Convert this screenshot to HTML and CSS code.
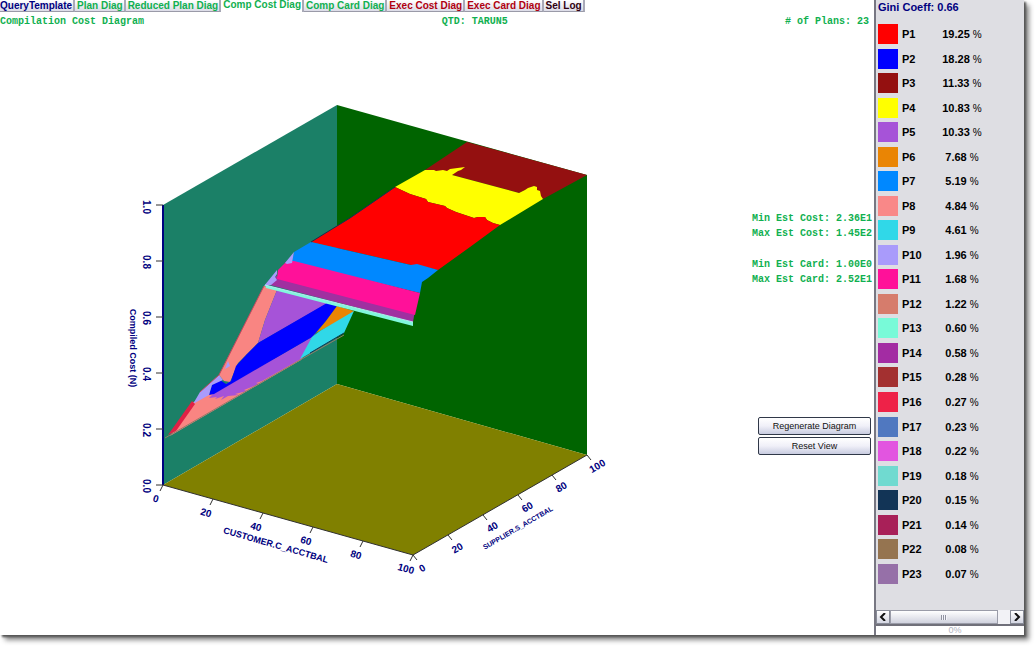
FILE: index.html
```html
<!DOCTYPE html>
<html lang="en">
<head>
<meta charset="utf-8">
<title>Compilation Cost Diagram</title>
<link rel="stylesheet" href="styles.css">
</head>
<body>
<div class="window">
  <main class="main">
    <div class="tabs" role="tablist">
      <button class="tab navy" role="tab">QueryTemplate</button>
      <button class="tab" role="tab">Plan Diag</button>
      <button class="tab" role="tab">Reduced Plan Diag</button>
      <button class="tab active" role="tab" aria-selected="true">Comp Cost Diag</button>
      <button class="tab" role="tab">Comp Card Diag</button>
      <button class="tab red" role="tab">Exec Cost Diag</button>
      <button class="tab red" role="tab">Exec Card Diag</button>
      <button class="tab maroon" role="tab">Sel Log</button>
    </div>
    <header class="header mono">
      <span class="title">Compilation Cost Diagram</span>
      <span>QTD: TARUN5</span>
      <span class="count"># of Plans: 23</span>
    </header>
    <div class="body">
      <figure class="chart">
        <svg viewBox="110 92 510 500" role="img" aria-label="Compiled cost surface">
          <polygon fill="#1b8067" points="163,205 337,105 337,384 163,485"/>
          <polygon fill="#006400" points="337,105 587,175 587,455 337,384"/>
          <polygon fill="#808000" points="163,485 337,384 587,455 413,555"/>
          <!-- upper sheet -->
          <polygon fill="#941010" points="467,142 587,175 543,199 534,186 519,193 452,175 425,170"/>
          <polygon fill="#ffff00" points="395,187 425,170 434,170 436,171 443,170 447,171 450,169 465,167 461,170 458,171 452,175 519,193 525,190 528,188 534,186 537,187 537,190 540,191 541,196 543,199 500,225 493,223 487,220 485,217 478,217 474,218 465,215 456,212 447,208 445,206 428,202 426,199 410,194"/>
          <polygon fill="#ff0000" points="311,242 350,218 395,187 410,194 426,199 428,202 445,206 447,208 456,212 465,215 474,218 478,217 485,217 487,220 493,223 500,225 470,247 438,270 417,265 411,265"/>
          <polygon fill="#0088ff" points="311,242 411,265 417,264 438,270 428,278 422,282 420,293 292,262 294,252"/>
          <polygon fill="#a030a0" points="276,276 415,310 413,322 270,285"/>
          <polygon fill="#ff1199" points="287,261 294,261 420,293 415,315 277,279 278,270"/>
          <polygon fill="#a99bfb" points="294,252 292,263 287,264 285,263"/>
          <polygon fill="#a99bfb" points="277,270 277,274 275,277 277,280 271,285 264,286"/>
          <path d="M311 242 350 218 395 187" fill="none" stroke="#143050"/>
          <!-- lower sheet -->
          <polygon fill="#f98582" points="264,286 277,290 265,320 258,343 247,354 238,363 230,382 224,381 219,375"/>
          <polygon fill="#a653d8" points="277,290 328,303 258,343 265,320"/>
          <polygon fill="#f98582" points="192,403 209,394 240,376 312,340 301,360 170,436"/>
          <polygon fill="#a653d8" points="312,337 316,333 301,359 262,381 256,383 259,384 244,390 247,391 235,394 239,395 228,396 221,400 224,396 215,399 217,397 209,398 213,394"/>
          <polygon fill="#0000ff" points="327,303 337,306 326,321 312,337 214,394 209,395 212,385 220,380 226,384 231,381 236,366 247,354 258,343"/>
          <polygon fill="#ea8504" points="337,306 354,311 350,315 316,333 326,321"/>
          <polygon fill="#30d8e8" points="354,311 344,333 300,359 312,337 320,331"/>
          <polygon fill="#a99bfb" points="219,375 223,380 212,385 209,395 193,404 200,392"/>
          <polygon fill="#a99bfb" points="228,361 230,366 225,369"/>
          <polygon fill="#e02045" points="192,401 195,404 176,431 168,435"/>
          <path d="M264 286 219 375 200 392" fill="none" stroke="#c34a5e"/>
          <path d="M165 438 300 360 344 335" fill="none" stroke="#937c68"/>
          <path d="M310 353 344 333" fill="none" stroke="#123456"/>
          <polygon fill="#80f8dc" points="265,285 413,322 413,326 266,288"/>
          <path d="M265 285 413 322" fill="none" stroke="#b8e8f4"/>
          <!-- axes -->
          <path class="axis" d="M163 205V485"/>
          <path class="edge" d="M163 485 413 555 587 455"/>
          <path class="edge" d="M156 205h7M156 261h7M156 317h7M156 373h7M156 429h7M156 485h7"/>
          <path class="edge" d="M163 485l-3 6M213 499l-3 6M263 513l-3 6M313 527l-3 6M363 541l-3 6M413 555l-3 6"/>
          <path class="edge" d="M413 555l4 5M448 535l4 5M483 515l4 5M518 495l4 5M552 475l4 5M587 455l4 5"/>
          <g class="ticks">
            <text transform="translate(143 207) rotate(90)">1.0</text>
            <text transform="translate(143 262) rotate(90)">0.8</text>
            <text transform="translate(143 318) rotate(90)">0.6</text>
            <text transform="translate(143 374) rotate(90)">0.4</text>
            <text transform="translate(143 430) rotate(90)">0.2</text>
            <text transform="translate(143 486) rotate(90)">0.0</text>
            <text transform="translate(155 502) rotate(16)">0</text>
            <text transform="translate(205 516) rotate(16)">20</text>
            <text transform="translate(255 530) rotate(16)">40</text>
            <text transform="translate(305 544) rotate(16)">60</text>
            <text transform="translate(355 558) rotate(16)">80</text>
            <text transform="translate(405 572) rotate(16)">100</text>
            <text transform="translate(424 571) rotate(-30)">0</text>
            <text transform="translate(459 551) rotate(-30)">20</text>
            <text transform="translate(494 530) rotate(-30)">40</text>
            <text transform="translate(529 510) rotate(-30)">60</text>
            <text transform="translate(563 490) rotate(-30)">80</text>
            <text transform="translate(599 469) rotate(-30)">100</text>
            <text class="name" transform="translate(130 348) rotate(90)">Compiled Cost (N)</text>
            <text class="name" transform="translate(275 548) rotate(16)">CUSTOMER.C_ACCTBAL</text>
            <text class="small" transform="translate(519 530) rotate(-30)">SUPPLIER.S_ACCTBAL</text>
          </g>
        </svg>
      </figure>
      <aside class="info">
        <p class="mono">Min Est Cost: 2.36E1<br>Max Est Cost: 1.45E2</p>
        <p class="mono">Min Est Card: 1.00E0<br>Max Est Card: 2.52E1</p>
        <div class="actions">
          <button class="button">Regenerate Diagram</button>
          <button class="button">Reset View</button>
        </div>
      </aside>
    </div>
  </main>
  <section class="legend">
    <h2 class="gini">Gini Coeff: 0.66</h2>
    <table class="plans">
      <tbody>
        <tr><td><i class="swatch p1"></i></td><th scope="row">P1</th><td>19.25 <span>%</span></td></tr>
        <tr><td><i class="swatch p2"></i></td><th scope="row">P2</th><td>18.28 <span>%</span></td></tr>
        <tr><td><i class="swatch p3"></i></td><th scope="row">P3</th><td>11.33 <span>%</span></td></tr>
        <tr><td><i class="swatch p4"></i></td><th scope="row">P4</th><td>10.83 <span>%</span></td></tr>
        <tr><td><i class="swatch p5"></i></td><th scope="row">P5</th><td>10.33 <span>%</span></td></tr>
        <tr><td><i class="swatch p6"></i></td><th scope="row">P6</th><td>7.68 <span>%</span></td></tr>
        <tr><td><i class="swatch p7"></i></td><th scope="row">P7</th><td>5.19 <span>%</span></td></tr>
        <tr><td><i class="swatch p8"></i></td><th scope="row">P8</th><td>4.84 <span>%</span></td></tr>
        <tr><td><i class="swatch p9"></i></td><th scope="row">P9</th><td>4.61 <span>%</span></td></tr>
        <tr><td><i class="swatch p10"></i></td><th scope="row">P10</th><td>1.96 <span>%</span></td></tr>
        <tr><td><i class="swatch p11"></i></td><th scope="row">P11</th><td>1.68 <span>%</span></td></tr>
        <tr><td><i class="swatch p12"></i></td><th scope="row">P12</th><td>1.22 <span>%</span></td></tr>
        <tr><td><i class="swatch p13"></i></td><th scope="row">P13</th><td>0.60 <span>%</span></td></tr>
        <tr><td><i class="swatch p14"></i></td><th scope="row">P14</th><td>0.58 <span>%</span></td></tr>
        <tr><td><i class="swatch p15"></i></td><th scope="row">P15</th><td>0.28 <span>%</span></td></tr>
        <tr><td><i class="swatch p16"></i></td><th scope="row">P16</th><td>0.27 <span>%</span></td></tr>
        <tr><td><i class="swatch p17"></i></td><th scope="row">P17</th><td>0.23 <span>%</span></td></tr>
        <tr><td><i class="swatch p18"></i></td><th scope="row">P18</th><td>0.22 <span>%</span></td></tr>
        <tr><td><i class="swatch p19"></i></td><th scope="row">P19</th><td>0.18 <span>%</span></td></tr>
        <tr><td><i class="swatch p20"></i></td><th scope="row">P20</th><td>0.15 <span>%</span></td></tr>
        <tr><td><i class="swatch p21"></i></td><th scope="row">P21</th><td>0.14 <span>%</span></td></tr>
        <tr><td><i class="swatch p22"></i></td><th scope="row">P22</th><td>0.08 <span>%</span></td></tr>
        <tr><td><i class="swatch p23"></i></td><th scope="row">P23</th><td>0.07 <span>%</span></td></tr>
      </tbody>
    </table>
    <div class="scrollbar">
      <button class="arrow" aria-label="Scroll left"><svg viewBox="0 0 8 8"><path d="M6 0 2 4l4 4"/></svg></button>
      <div class="thumb"><i class="grip"></i></div>
      <div class="track"></div>
      <button class="arrow" aria-label="Scroll right"><svg viewBox="0 0 8 8"><path d="M2 0l4 4-4 4"/></svg></button>
    </div>
    <div class="progress">0%</div>
  </section>
</div>
</body>
</html>
```

FILE: styles.css
```css
* { box-sizing: border-box; }

body {
  margin: 0;
  padding: 0 12px 12px 0;
  background: #fff;
  font-family: "Liberation Sans", Arial, sans-serif;
  font-size: 11px;
}

button { font-family: inherit; margin: 0; }

.window {
  display: flex;
  min-height: calc(100vh - 12px);
  background: #fff;
  box-shadow: 2px 2px 2px #555, 5px 5px 5px #888;
}

.main { flex: 1; min-width: 0; }

.tabs { display: flex; height: 12px; }

.tab {
  flex: none;
  height: 12px;
  padding: 0 1px 0 2px;
  border: 0;
  border-right: 2px solid #a9aab8;
  border-bottom: 1px solid #9a9aa8;
  background: linear-gradient(#fff, #dcdce8);
  color: #10b050;
  font-size: 10px;
  font-weight: bold;
  line-height: 11px;
}

.tab.active { background: #fff; border-bottom: 0; line-height: 8px; padding-bottom: 3px; }
.tab.navy { color: #000080; padding-left: 0; }
.tab.red { color: #b00010; }
.tab.maroon { color: #300010; }

.mono {
  font-family: "Liberation Mono", "Courier New", monospace;
  font-size: 10px;
  font-weight: bold;
  color: #10b050;
}

.header {
  display: grid;
  grid-template-columns: 11fr auto 9fr;
  height: 16px;
  padding-right: 5px;
  line-height: 20px;
}

.count { text-align: right; }

.body { display: flex; }

.chart { flex: 1; margin: 0; padding: 64px 132px 0 110px; }
.chart svg { display: block; width: 100%; }

.axis { stroke: #000080; stroke-width: 2; }
.edge { stroke: #303030; stroke-width: 1; fill: none; }

.ticks {
  fill: #000080;
  font-size: 10px;
  font-weight: bold;
  text-anchor: middle;
}

.name { font-size: 9px; }
.small { font-size: 7px; }

.info { flex: none; width: 122px; padding: 183px 2px 0 0; }
.info p { margin: 0 0 16px; line-height: 15px; white-space: nowrap; }

.actions { display: grid; gap: 2px; margin-top: 130px; padding: 0 1px 0 6px; }

.button {
  height: 18px;
  padding: 0;
  border: 1px solid #303848;
  border-radius: 2px;
  background: linear-gradient(#fff, #f0f0f8 50%, #c8cce0);
  color: #111;
  font-size: 9px;
  line-height: 16px;
}

.legend {
  display: flex;
  flex-direction: column;
  flex: none;
  width: 150px;
  border-left: 2px solid #777782;
  background: #dedee3;
}

.gini {
  margin: 0;
  padding-left: 2px;
  height: 22px;
  color: #000080;
  font-size: 11px;
  line-height: 15px;
}

.plans { width: 118px; height: 564px; border-collapse: collapse; table-layout: fixed; }
.plans td, .plans th { padding: 0; font-weight: bold; }
.plans th { width: 32px; padding-left: 4px; text-align: left; }
.plans td:first-child { width: 22px; padding-left: 2px; }
.plans td:last-child { text-align: center; }
.plans span { font-weight: normal; font-size: 10px; }

.swatch { display: block; width: 20px; height: 20px; }
.p1 { background: #f00; }
.p2 { background: #00f; }
.p3 { background: #941010; }
.p4 { background: #ff0; }
.p5 { background: #a653d8; }
.p6 { background: #ea8504; }
.p7 { background: #0088ff; }
.p8 { background: #f98888; }
.p9 { background: #30d8e8; }
.p10 { background: #a99bfb; }
.p11 { background: #ff1199; }
.p12 { background: #d67c6c; }
.p13 { background: #78fad8; }
.p14 { background: #a32ca3; }
.p15 { background: #a33030; }
.p16 { background: #ee2248; }
.p17 { background: #5078c0; }
.p18 { background: #e255e0; }
.p19 { background: #70dad0; }
.p20 { background: #123456; }
.p21 { background: #a82058; }
.p22 { background: #957450; }
.p23 { background: #9670a8; }

.scrollbar { display: flex; height: 16px; margin-top: auto; border-bottom: 2px solid #70707a; }

.arrow {
  display: grid;
  place-items: center;
  width: 14px;
  padding: 0;
  border: 1px solid #888c98;
  background: linear-gradient(#fff, #d4d6e2);
}
.arrow svg { width: 8px; height: 8px; fill: none; stroke: #111; stroke-width: 2; }

.thumb {
  display: grid;
  place-items: center;
  flex: 1;
  border: 1px solid #9a9ca8;
  background: linear-gradient(#fff, #d0d2de);
}
.grip { width: 6px; height: 5px; background: repeating-linear-gradient(90deg, #9093a0 0 1px, #f4f4fa 1px 2px); }
.track { width: 12px; background: #f2f2f6; }

.progress {
  padding-left: 10px;
  background: #fff;
  color: #b0b4c0;
  font-size: 9px;
  line-height: 9px;
  text-align: center;
}
```
